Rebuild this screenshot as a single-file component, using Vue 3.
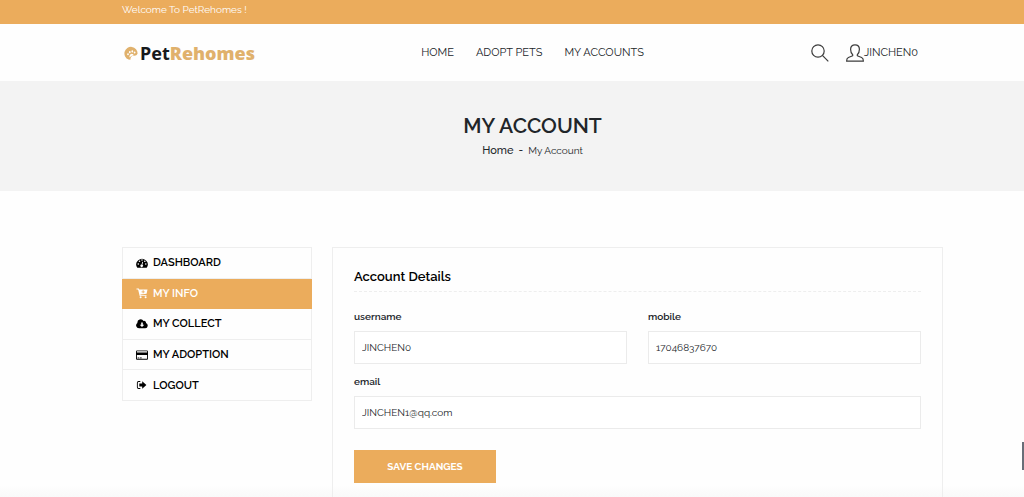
<script setup>
import { ref } from 'vue'

const navLinks = ['HOME', 'ADOPT PETS', 'MY ACCOUNTS']
const menu = [
  { label: 'DASHBOARD', icon: 'dashboard' },
  { label: 'MY INFO', icon: 'cart' },
  { label: 'MY COLLECT', icon: 'cloud' },
  { label: 'MY ADOPTION', icon: 'card' },
  { label: 'LOGOUT', icon: 'logout' },
]
const active = ref('MY INFO')
const username = ref('JINCHEN0')
const mobile = ref('17046837670')
const email = ref('JINCHEN1@qq.com')
</script>

<template>
  <div class="page">
    <div class="topbar">Welcome To PetRehomes !</div>

    <header class="header">
      <a class="logo" href="#" aria-label="PetRehomes">
        <svg class="logo-mark" viewBox="0 0 14 14" aria-hidden="true">
          <path fill="#e0b16c" d="M4.600 13.600A6.600 6.600 0 1 1 13.600 7.600C12.800 9.600 11.400 9.900 9.600 9.700C7.600 9.600 6.400 11 6.400 13.700Z" />
          <g fill="#fff">
            <ellipse cx="4" cy="8.200" rx="0.900" ry="1" />
            <ellipse cx="5.800" cy="6.200" rx="0.900" ry="1.100" />
            <ellipse cx="8.300" cy="5.400" rx="0.900" ry="1.100" />
            <ellipse cx="10.600" cy="6.600" rx="0.900" ry="1" />
            <path d="M5.400 10.200Q5.800 7.900 7.700 7.700Q9.800 7.800 9.600 9.400Q7.400 9.200 5.600 11.400Z" />
          </g>
        </svg>
        <span>Pet<b>Rehomes</b></span>
      </a>
      <nav class="nav">
        <a v-for="link in navLinks" :key="link" href="#">{{ link }}</a>
      </nav>
      <div class="tools">
        <button class="search" type="button" aria-label="Search">
          <svg viewBox="0 0 18 18" fill="none" stroke="#3c3c3c" stroke-width="1.200">
            <circle cx="7" cy="7" r="6.200" />
            <path d="M11.400 11.400L17.300 17.300" />
          </svg>
        </button>
        <a class="user" href="#">
          <svg viewBox="0 0 18 18" fill="none" stroke="#3c3c3c" stroke-width="1.200" stroke-linejoin="round" aria-hidden="true">
            <path d="M6.700 10.700C5.300 9.500 4.600 7.600 4.600 5.300C4.600 2.400 6.300.8 9 .8s4.400 1.600 4.400 4.500c0 2.300-.7 4.200-2.100 5.400v1.100l4.300 1.700c1.300.6 1.800 1.500 1.800 3.700H.6c0-2.200.5-3.100 1.800-3.700l4.300-1.700Z" />
          </svg>
          <span>JINCHEN0</span>
        </a>
      </div>
    </header>

    <section class="banner">
      <h1>MY ACCOUNT</h1>
      <div class="crumbs"><a href="#">Home</a><span>-</span><small>My Account</small></div>
    </section>

    <main class="content">
      <nav class="side">
        <a
          v-for="item in menu"
          :key="item.label"
          href="#"
          :class="{ active: item.label === active }"
          @click.prevent="active = item.label"
        >
          <svg viewBox="0 0 12 12" fill="currentColor" aria-hidden="true">
            <path v-if="item.icon === 'dashboard'" fill-rule="evenodd" d="M1.300 10.800A5.700 5.700 0 1 1 10.700 10.800ZM1.500 7a.8.8 0 1 0 1.600 0a.8.8 0 1 0-1.600 0M2.700 4.200a.8.8 0 1 0 1.600 0a.8.8 0 1 0-1.600 0M5.200 3a.8.8 0 1 0 1.600 0a.8.8 0 1 0-1.600 0M8 4.200a.8.8 0 1 0 1.600 0a.8.8 0 1 0-1.600 0M9 7a.8.8 0 1 0 1.600 0a.8.8 0 1 0-1.600 0M6.300 4.800L5.600 7.500A1.300 1.300 0 1 0 6.400 7.700L7.100 5Z" />
            <g v-else-if="item.icon === 'cart'">
              <path fill-rule="evenodd" d="M.5 1.500H2.800L3.200 2.500H11.500L10.600 6.800L4.400 7.500L4.500 8.200H10.500V9.100H3.700L2.100 2.400H.5ZM6.700 3.300V4.400H5.500V5.200H6.700V6.300H7.600V5.200H8.800V4.400H7.600V3.300Z" />
              <circle cx="4.600" cy="10.200" r="1" />
              <circle cx="9.600" cy="10.200" r="1" />
            </g>
            <path v-else-if="item.icon === 'cloud'" fill-rule="evenodd" d="M3 10.300A2.900 2.900 0 0 1 1.400 5A3.300 3.300 0 0 1 7.500 2.900A2 2 0 0 1 10 5.100A2.700 2.700 0 0 1 9.300 10.300ZM5.200 4.600V6.700H3.700L6 9.100L8.300 6.700H6.800V4.600Z" />
            <path v-else-if="item.icon === 'card'" fill-rule="evenodd" d="M1 1.500H11Q12 1.500 12 2.500V9.700Q12 10.700 11 10.700H1Q0 10.700 0 9.700V2.500Q0 1.500 1 1.500ZM.9 2.300V3.500H11.100V2.300ZM.9 6V9.800H11.100V6ZM1.600 8.500H3V9.200H1.600ZM3.700 8.500H5.700V9.200H3.700Z" />
            <path v-else d="M4.300 2H2.600Q.9 2 .9 3.700V8.300Q.9 10 2.600 10H4.300V9.100H2.600Q1.800 9.100 1.800 8.300V3.700Q1.800 2.900 2.600 2.900H4.300ZM6.200 2.200L10.400 6L6.200 9.800V7.600H3.300V4.400H6.200Z" />
          </svg>
          <span>{{ item.label }}</span>
        </a>
      </nav>

      <section class="panel">
        <h2>Account Details</h2>
        <form @submit.prevent>
          <div class="field">
            <label for="username">username</label>
            <input id="username" v-model="username" type="text" />
          </div>
          <div class="field">
            <label for="mobile">mobile</label>
            <input id="mobile" v-model="mobile" type="tel" />
          </div>
          <div class="field wide">
            <label for="email">email</label>
            <input id="email" v-model="email" type="email" />
          </div>
          <button class="save" type="submit">SAVE CHANGES</button>
        </form>
      </section>
    </main>
    <div class="edge-tab"></div>
  </div>
</template>

<style>
body {
  margin: 0;
  background: #fefefe;
}
</style>

<style scoped>
.page {
  min-height: 100vh;
  display: flex;
  flex-direction: column;
  font-family: Raleway, Lato, "Open Sans", sans-serif;
  font-size: 10px;
  line-height: 16px;
  color: #212529;
  background: linear-gradient(to top, #f9f9f9, #fefefe 12px);
}
.page * {
  box-sizing: border-box;
}
a {
  color: inherit;
  text-decoration: none;
}
button,
input {
  font: inherit;
  color: inherit;
}
.topbar {
  height: 24px;
  padding: 2px 81px 0 122px;
  background: #ebac5c;
  color: #fff;
}
.header {
  height: 57px;
  padding: 0 81px 0 122px;
  display: grid;
  grid-template-columns: 1fr auto 1fr;
  align-items: center;
  background: #fefefe;
}
.logo {
  display: flex;
  align-items: center;
  gap: 2px;
  padding-left: 2px;
  font: 700 18px/24px "Noto Sans", sans-serif;
  color: #17191c;
}
.logo b {
  color: #e0b16c;
}
.logo-mark {
  width: 14px;
  height: 14px;
}
.nav {
  display: flex;
  gap: 22px;
  font-size: 11px;
}
.tools {
  display: flex;
  justify-content: flex-end;
  align-items: center;
  gap: 17px;
  padding-right: 25px;
}
.search {
  display: flex;
  padding: 0;
  border: 0;
  background: none;
}
.tools svg {
  width: 18px;
  height: 18px;
}
.user {
  display: flex;
  align-items: center;
  font-size: 11px;
}
.banner {
  height: 110px;
  padding: 31px 81px 0 122px;
  background: #f3f3f3;
  text-align: center;
}
h1 {
  margin: 0;
  font-size: 21px;
  line-height: 28px;
  font-weight: 600;
}
.crumbs {
  display: flex;
  justify-content: center;
  gap: 5px;
  padding-top: 3px;
  font-size: 11px;
  font-weight: 500;
}
.crumbs small {
  font-size: 10px;
  font-weight: 400;
}
.content {
  flex: 1;
  display: grid;
  grid-template-columns: 190px 1fr;
  gap: 20px;
  padding: 56px 81px 0 122px;
}
.side {
  align-self: start;
  display: grid;
  grid-auto-rows: 1fr;
  height: 154px;
  border: 1px solid #eee;
  border-bottom: 0;
  font-size: 11px;
  font-weight: 600;
  color: #000;
}
.side a {
  display: flex;
  align-items: center;
  gap: 5px;
  padding-left: 13px;
  border-bottom: 1px solid #eee;
}
.side span {
  padding-top: 1px;
}
.side svg {
  width: 12px;
  height: 12px;
}
.side .active {
  margin: 0 -1px;
  padding-left: 14px;
  background: #ebac5c;
  border-color: #ebac5c;
  color: #fff;
}
.panel {
  padding: 20px 21px 13px;
  border: 1px solid #eee;
  border-bottom: 0;
}
h2 {
  margin: 0 0 17px;
  padding-bottom: 6px;
  border-bottom: 1px dashed #eee;
  font-size: 13px;
  line-height: 17px;
  font-weight: 600;
  color: #000;
}
form {
  display: grid;
  grid-template-columns: 1fr 1fr;
  gap: 10px 21px;
}
.field {
  display: flex;
  flex-direction: column;
  gap: 6px;
}
.field label {
  font-weight: 600;
}
.wide {
  grid-column: 1 / -1;
}
.field input {
  width: 100%;
  height: 33px;
  padding: 0 7px;
  border: 1px solid #ebebeb;
  border-radius: 0;
  background: #fff;
  outline: 0;
}
.save {
  justify-self: start;
  width: 142px;
  height: 33px;
  margin-top: 11px;
  padding: 0;
  border: 0;
  background: #ebac5c;
  color: #fff;
  font-weight: 700;
}
.edge-tab {
  position: fixed;
  right: 0;
  bottom: 27px;
  width: 2px;
  height: 28px;
  background: #686e78;
}
</style>
